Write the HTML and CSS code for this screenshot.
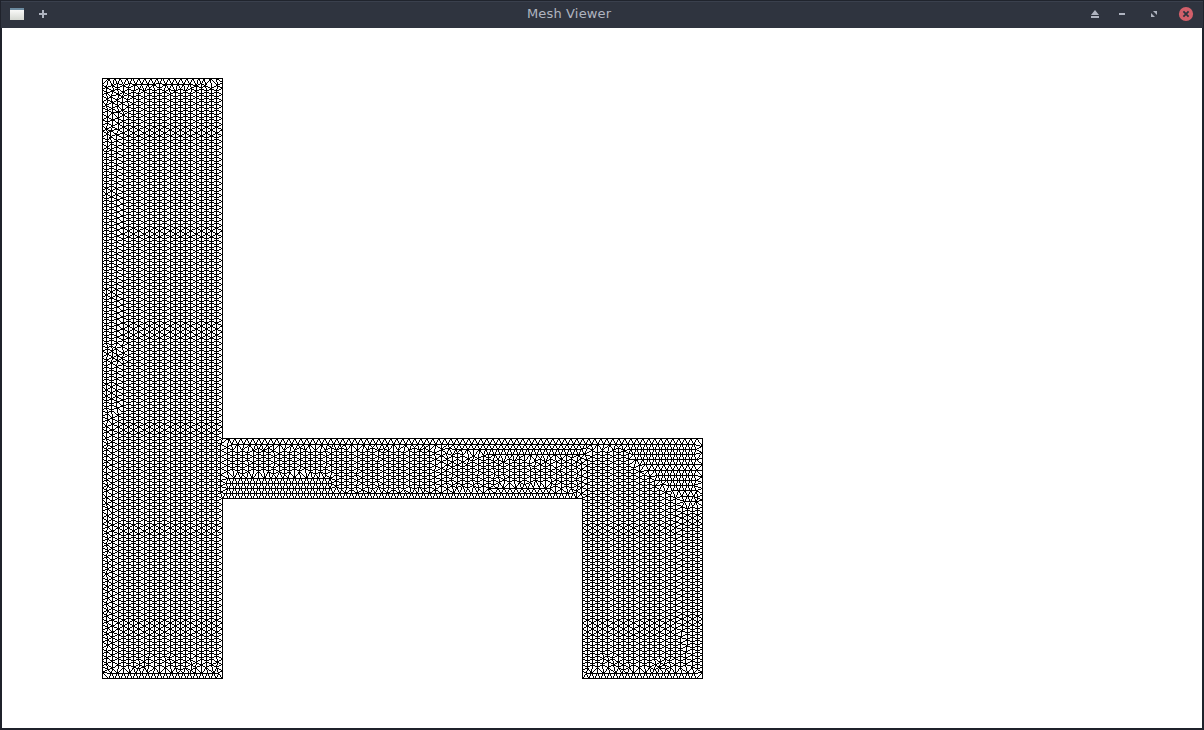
FILE: index.html
```html
<!DOCTYPE html>
<html lang="en">
<head>
<meta charset="utf-8">
<title>Mesh Viewer</title>
<link rel="stylesheet" href="styles.css">
</head>
<body>
<div class="window">
  <header class="titlebar">
    <div class="side side-left">
      <svg class="icon" width="16" height="16" viewBox="0 0 16 16"><defs><linearGradient id="g" x2="0" y2="1"><stop offset="0" stop-color="#fff"/><stop offset="1" stop-color="#d5d8d2"/></linearGradient></defs><rect x="1" y="2" width="14" height="12" fill="url(#g)"/><rect x="1" y="2" width="14" height="2" fill="#6c8ba0"/></svg>
      <svg class="icon plus" width="16" height="16" viewBox="0 0 16 16"><path d="M4 8h8M8 4v8" stroke="#afb4c0" stroke-width="2"/></svg>
    </div>
    <h1 class="title">Mesh Viewer</h1>
    <div class="side side-right">
      <svg class="icon shade" width="16" height="16" viewBox="0 0 16 16"><path d="M8 4l4 5H4zM4 10h8v2H4z" fill="#afb4c0"/></svg>
      <svg class="icon minimize" width="16" height="16" viewBox="0 0 16 16"><path d="M5 7h6v2H5z" fill="#afb4c0"/></svg>
      <svg class="icon restore" width="16" height="16" viewBox="0 0 16 16"><path d="M7 5h4v4zM5 7v4h4z" fill="#afb4c0"/></svg>
      <svg class="icon close" width="16" height="16" viewBox="0 0 16 16"><circle cx="8" cy="8" r="7.1" fill="#d25f6a"/><path d="M5.4 5.4l5.2 5.2M10.6 5.4l-5.2 5.2" stroke="#2f343f" stroke-width="1.8"/></svg>
    </div>
  </header>
  <canvas class="viewport" id="mesh" width="1200" height="700"></canvas>
</div>
<script src="mesh.js"></script>
</body>
</html>
```
FILE: styles.css
```css
body {
  margin: 0;
  font-family: "DejaVu Sans", sans-serif;
  overflow: hidden;
}
.window {
  box-sizing: border-box;
  width: 1204px;
  height: 730px;
  background: #1f222b;
  padding: 0 2px 2px;
}
.titlebar {
  box-sizing: border-box;
  display: grid;
  grid-template-columns: 518px auto 1fr;
  align-items: center;
  height: 28px;
  margin: 0 -1px;
  padding: 0 9px 0 8px;
  background: #2f343f;
  border-top: 1px solid #20242d;
  box-shadow: inset 0 1px #3a404d;
}
.title {
  margin: -2px 0 0;
  font-size: 13px;
  font-weight: 400;
  line-height: 26px;
  letter-spacing: 0.15px;
  color: #afb4c0;
}
.side { display: flex; align-items: center; }
.side-right { justify-content: flex-end; }
.icon { display: block; margin-top: -1px; }
.plus { margin-left: 10px; }
.minimize { margin-left: 11px; }
.restore { margin-left: 16px; }
.close { margin-left: 16px; }
.viewport {
  display: block;
  background: #fff;
}
```
FILE: mesh.js
```js
const canvas = document.getElementById("mesh");
const ctx = canvas.getContext("2d");
const OX = 2, OY = 28;
const outline = [[102,78],[222,78],[222,438],[702,438],[702,678],[582,678],[582,498],[222,498],[222,678],[102,678]];
const H = 5.94, W = 5.196;
const points = [], buckets = new Map();

let seed = 7;
const random = () => (seed = (seed * 16807) % 2147483647) / 2147483647;

function inside(x, y) {
  return (x > 102 && x < 222 && y > 78 && y < 678) ||
    (x >= 222 && x < 702 && y > 438 && y < 498) ||
    (x > 582 && x < 702 && y >= 498 && y < 678);
}

function add(x, y, gap) {
  const bx = Math.floor(x / 6), by = Math.floor(y / 6);
  for (let i = -1; i <= 1; i++) for (let j = -1; j <= 1; j++)
    for (const p of buckets.get((bx + i) * 1000 + by + j) || [])
      if (Math.hypot(p[0] - x, p[1] - y) < gap) return;
  const key = bx * 1000 + by, p = [x, y];
  if (!buckets.has(key)) buckets.set(key, []);
  buckets.get(key).push(p);
  points.push(p);
}

// Boundary vertices: corners, then horizontal edges, then vertical edges
outline.forEach(([x, y]) => add(x, y, 0));
outline.forEach(([x, y], i) => {
  const [u, v] = outline[(i + 1) % outline.length];
  if (y !== v) return;
  const n = Math.round(Math.abs(u - x) / 6);
  for (let k = 1; k < n; k++) add(x + (u - x) * k / n, y, 0);
});
const BASE = 325 - 60 * H;
function edge(x, y0, y1, base) {
  for (let y = base; y < y1 - 3; y += H) if (y > y0 + 3) add(x, y, 3);
}
edge(222, 78, 438, BASE);
edge(222, 498, 678, BASE);
edge(582, 498, 678, BASE);
edge(102, 78, 678, BASE + 1.6);
edge(702, 438, 678, BASE + 1.9);

// Vertical columns of equilateral triangles, starting at x0 and advancing by step
function columns(x0, step, count, base, y0, y1, test = () => true, jitter = () => 0) {
  for (let k = 1; k <= count; k++)
    for (let y = base + (k % 2) * (H / 2 + .12); y <= y1; y += H) {
      const x = x0 + k * step;
      if (y < y0 || !inside(x, y) || !test(x, y)) continue;
      const j = jitter(x, y);
      add(x + (random() - .5) * j, y + (random() - .5) * j, 4.1);
    }
}
// Horizontal rows, starting at y0 and advancing by dir
function rows(y0, dir, count, x0, x1, test = () => true) {
  for (let k = 1; k <= count; k++)
    for (let x = x0 + (k % 2) * 3; x <= x1; x += 6) {
      const y = y0 + dir * k * W;
      if (inside(x, y) && test(x, y)) add(x, y, 4.2);
    }
}

// First layer along the horizontal edges
const broken = x => (x > 133 && x < 156) || (x > 164 && x < 190);
rows(78, 1, 1, 102, 216, broken);
rows(678, -1, 1, 102, 216);
rows(678, -1, 1, 588, 702);
rows(438, 1, 1, 228, 702);
rows(498, -1, 1, 228, 576);

// Left column
const seam = y => y < 150 ? 110 + (y - 78) * .13 : y < 410 ? 120.2 : 110.2;
const rough = (x, y) => y < 88 ? 1.2 : y < 150 && x < 106 + (150 - y) * .5 ? 1.8 : y > 345 && y < 365 && x < 130 ? 1.6 : y > 410 && x < 112 ? 1.2 : y > 655 ? 1 : 0;
columns(102, 4.85, 3, BASE + 1.6, 82, 674, (x, y) => x <= seam(y), rough);
columns(222, -W, 22, BASE, 82, 674, (x, y) => x > seam(y), rough);

// Connecting bar
rows(498, -1, 4, 228, 332);
rows(438, 1, 3, 425, 585, (x, y) => y < 444 + (x - 425) * .16);
rows(498, -1, 2, 497, 545);
columns(222, W, 41, BASE, 441, 495, () => true, () => .3);
columns(582, -W, 30, BASE + 2, 441, 495, () => true, () => .8);

// Right column
rows(438, 1, 12, 600, 702, (x, y) => x > 624 + Math.max(0, y - 449) * 1.15);
columns(702, -4.95, 4, BASE + 1.9, 495, 674, (x, y) => x > (y < 618 ? 679 : 679 + (y - 618) * .25));
columns(582, W, 18, BASE, 441, 674, () => true, (x, y) => y > 655 ? .9 : 0);
columns(582, W, 22, BASE, 618, 674, (x, y) => x < 679 + (y - 618) * .25);

// Fill any holes left between fronts
for (let x = 104; x < 700; x += .7)
  for (let y = 80; y < 676; y += .7)
    if (inside(x, y)) add(x, y, 4.9);

// Delaunay triangulation
const cx = p => p[0] + Math.sin(p[0] * 91 + p[1] * 37) * 1e-3;
const cy = p => p[1] + Math.cos(p[0] * 53 + p[1] * 71) * 1e-3;
const P = points.map(p => [cx(p), cy(p)]);
const N = P.length;
P.push([-5000, -5000], [6000, -5000], [400, 9000]);

function triangle(a, b, c) {
  const [ax, ay] = P[a], bx = P[b][0] - ax, by = P[b][1] - ay, dx = P[c][0] - ax, dy = P[c][1] - ay;
  const d = 2 * (bx * dy - by * dx), bb = bx * bx + by * by, dd = dx * dx + dy * dy;
  const ux = (dy * bb - by * dd) / d, uy = (bx * dd - dx * bb) / d;
  return { v: [a, b, c], x: ax + ux, y: ay + uy, r: ux * ux + uy * uy };
}

const order = [...Array(N).keys()].sort((a, b) => P[a][0] - P[b][0]);
let open = [triangle(N, N + 1, N + 2)];
const done = [];
for (const i of order) {
  const [x, y] = P[i], edges = new Map(), keep = [];
  for (const t of open) {
    const dx = x - t.x, dy = y - t.y;
    if (dx > 0 && dx * dx > t.r) { done.push(t); continue; }
    if (dx * dx + dy * dy > t.r) { keep.push(t); continue; }
    for (let k = 0; k < 3; k++) {
      const a = t.v[k], b = t.v[(k + 1) % 3], key = Math.min(a, b) * 20000 + Math.max(a, b);
      if (edges.has(key)) edges.set(key, null); else edges.set(key, [a, b]);
    }
  }
  for (const e of edges.values()) if (e) keep.push(triangle(e[0], e[1], i));
  open = keep;
}
done.push(...open);

// Aliased one-pixel lines
ctx.fillStyle = "#000";
function line(x0, y0, x1, y1) {
  x0 = Math.floor(x0 + .01); y0 = Math.ceil(y0 - .01);
  x1 = Math.floor(x1 + .01); y1 = Math.ceil(y1 - .01);
  const dx = Math.abs(x1 - x0), dy = -Math.abs(y1 - y0), sx = x0 < x1 ? 1 : -1, sy = y0 < y1 ? 1 : -1;
  let err = dx + dy;
  for (;;) {
    ctx.fillRect(x0 - OX, y0 - OY, 1, 1);
    if (x0 === x1 && y0 === y1) break;
    const e = 2 * err;
    if (e >= dy) { err += dy; x0 += sx; }
    if (e <= dx) { err += dx; y0 += sy; }
  }
}

// Each shared edge is drawn once, left to right
const drawn = new Set();
for (const t of done) {
  if (t.v.some(i => i >= N)) continue;
  const q = t.v.map(i => points[i]);
  if (!inside((q[0][0] + q[1][0] + q[2][0]) / 3, (q[0][1] + q[1][1] + q[2][1]) / 3)) continue;
  for (let k = 0; k < 3; k++) {
    let a = t.v[k], b = t.v[(k + 1) % 3];
    if (points[a][0] > points[b][0]) [a, b] = [b, a];
    const key = a * 20000 + b;
    if (drawn.has(key)) continue;
    drawn.add(key);
    line(...points[a], ...points[b]);
  }
}
outline.forEach((p, i) => line(...p, ...outline[(i + 1) % outline.length]));
```
